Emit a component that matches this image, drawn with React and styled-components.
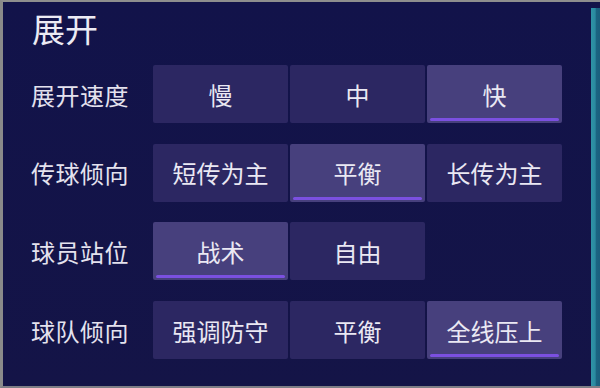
import React from "react";
import styled, { createGlobalStyle } from "styled-components";

const GlobalStyle = createGlobalStyle`
  html, body {
    margin: 0;
    padding: 0;
    background: #8c8c8c;
  }
  body {
    font-family: "Noto Sans CJK SC", "Noto Sans", sans-serif;
  }
`;

const Frame = styled.div`
  width: 600px;
  height: 388px;
  box-sizing: border-box;
  border-top: 2px solid #8e8e8e;
  border-left: 3px solid #8a8a8a;
  border-bottom: 2px solid #7e7e86;
  display: flex;
  background: #131449;
`;

const Panel = styled.div`
  flex: 1;
  padding: 6px 0 0 28px;
  background: linear-gradient(180deg, #12134a 0%, #141447 100%);
`;

const SideBar = styled.div`
  width: 9px;
  margin-top: 6px;
  background: linear-gradient(90deg, #2f93a6 0%, #2a8aa0 45%, #1b6482 60%, #1a5f7e 100%);
`;

const Title = styled.h1`
  margin: 0 0 17px 1px;
  font-size: 33px;
  line-height: 40px;
  font-weight: 400;
  color: #ecebf4;
`;

const Grid = styled.div`
  display: grid;
  grid-template-columns: 120px repeat(3, 135px);
  grid-auto-rows: 58px;
  column-gap: 2px;
  row-gap: 20.7px;
`;

const Label = styled.div`
  display: flex;
  align-items: center;
  font-size: 24px;
  color: #e4e2ee;
  letter-spacing: 0.5px;
`;

const Option = styled.div`
  position: relative;
  display: flex;
  align-items: center;
  justify-content: center;
  font-size: 24px;
  color: #eae8f3;
  border-radius: 2px;
  background: ${(p) => (p.$active ? "#47407d" : "#2c2762")};

  &::after {
    content: "";
    display: ${(p) => (p.$active ? "block" : "none")};
    position: absolute;
    left: 3px;
    right: 3px;
    bottom: 2px;
    height: 3px;
    border-radius: 2px;
    background: #7b50e0;
  }
`;

const rows = [
  { label: "展开速度", options: ["慢", "中", "快"], active: 2 },
  { label: "传球倾向", options: ["短传为主", "平衡", "长传为主"], active: 1 },
  { label: "球员站位", options: ["战术", "自由"], active: 0 },
  { label: "球队倾向", options: ["强调防守", "平衡", "全线压上"], active: 2 },
];

export default function App() {
  return (
    <>
      <GlobalStyle />
      <Frame>
        <Panel>
          <Title>展开</Title>
          <Grid>
            {rows.map((row) => (
              <React.Fragment key={row.label}>
                <Label>{row.label}</Label>
                {row.options.map((opt, i) => (
                  <Option key={opt + i} $active={i === row.active}>
                    {opt}
                  </Option>
                ))}
                {row.options.length < 3 && <div />}
              </React.Fragment>
            ))}
          </Grid>
        </Panel>
        <SideBar />
      </Frame>
    </>
  );
}
